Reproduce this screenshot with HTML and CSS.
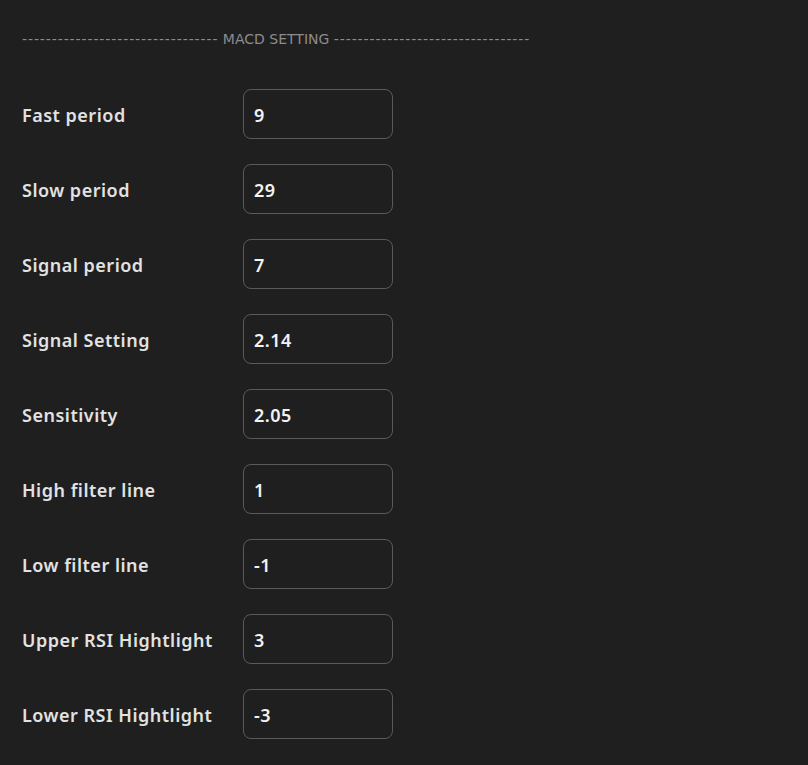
FILE: index.html
```html
<!DOCTYPE html>
<html lang="en">
<head>
    <meta charset="UTF-8">
    <meta name="viewport" content="width=device-width, initial-scale=1.0">
    <title>MACD Setting</title>
    <link rel="stylesheet" href="styles.css">
</head>
<body>
    <div class="settings">
        <div class="section-title"><span class="dashes">---------------------------------</span> MACD SETTING <span class="dashes">---------------------------------</span></div>
        <div class="row"><label for="fast">Fast period</label><input type="text" id="fast" value="9"></div>
        <div class="row"><label for="slow">Slow period</label><input type="text" id="slow" value="29"></div>
        <div class="row"><label for="signal">Signal period</label><input type="text" id="signal" value="7"></div>
        <div class="row"><label for="signalSetting">Signal Setting</label><input type="text" id="signalSetting" value="2.14"></div>
        <div class="row"><label for="sensitivity">Sensitivity</label><input type="text" id="sensitivity" value="2.05"></div>
        <div class="row"><label for="highFilter">High filter line</label><input type="text" id="highFilter" value="1"></div>
        <div class="row"><label for="lowFilter">Low filter line</label><input type="text" id="lowFilter" value="-1"></div>
        <div class="row"><label for="upperRsi">Upper RSI Hightlight</label><input type="text" id="upperRsi" value="3"></div>
        <div class="row"><label for="lowerRsi">Lower RSI Hightlight</label><input type="text" id="lowerRsi" value="-3"></div>
    </div>
</body>
</html>
```

FILE: styles.css
```css
body {
    margin: 0;
    background-color: #1f1f1f;
    font-family: 'DejaVu Sans', sans-serif;
    color: #e2e2e2;
}
.settings {
    padding: 29px 22px 0 22px;
    display: flex;
    flex-direction: column;
    gap: 25px;
}
.section-title {
    font-size: 14px;
    line-height: 20px;
    color: #8c8c8c;
    white-space: nowrap;
    margin-bottom: 15px;
}
.dashes {
    letter-spacing: 0.9px;
}
.row {
    display: flex;
    align-items: center;
}
.row label {
    width: 221px;
    padding-top: 1px;
    font-family: 'Noto Sans', sans-serif;
    font-size: 18px;
    font-weight: 600;
    letter-spacing: 0.5px;
}
.row input {
    box-sizing: border-box;
    width: 150px;
    height: 50px;
    padding: 1px 10px 0 10px;
    background: transparent;
    border: 1px solid #5a5a5a;
    border-radius: 8px;
    color: #f2f2f2;
    font-family: 'Noto Sans', sans-serif;
    font-size: 18px;
    font-weight: 600;
    letter-spacing: 0.5px;
    outline: none;
}
```
